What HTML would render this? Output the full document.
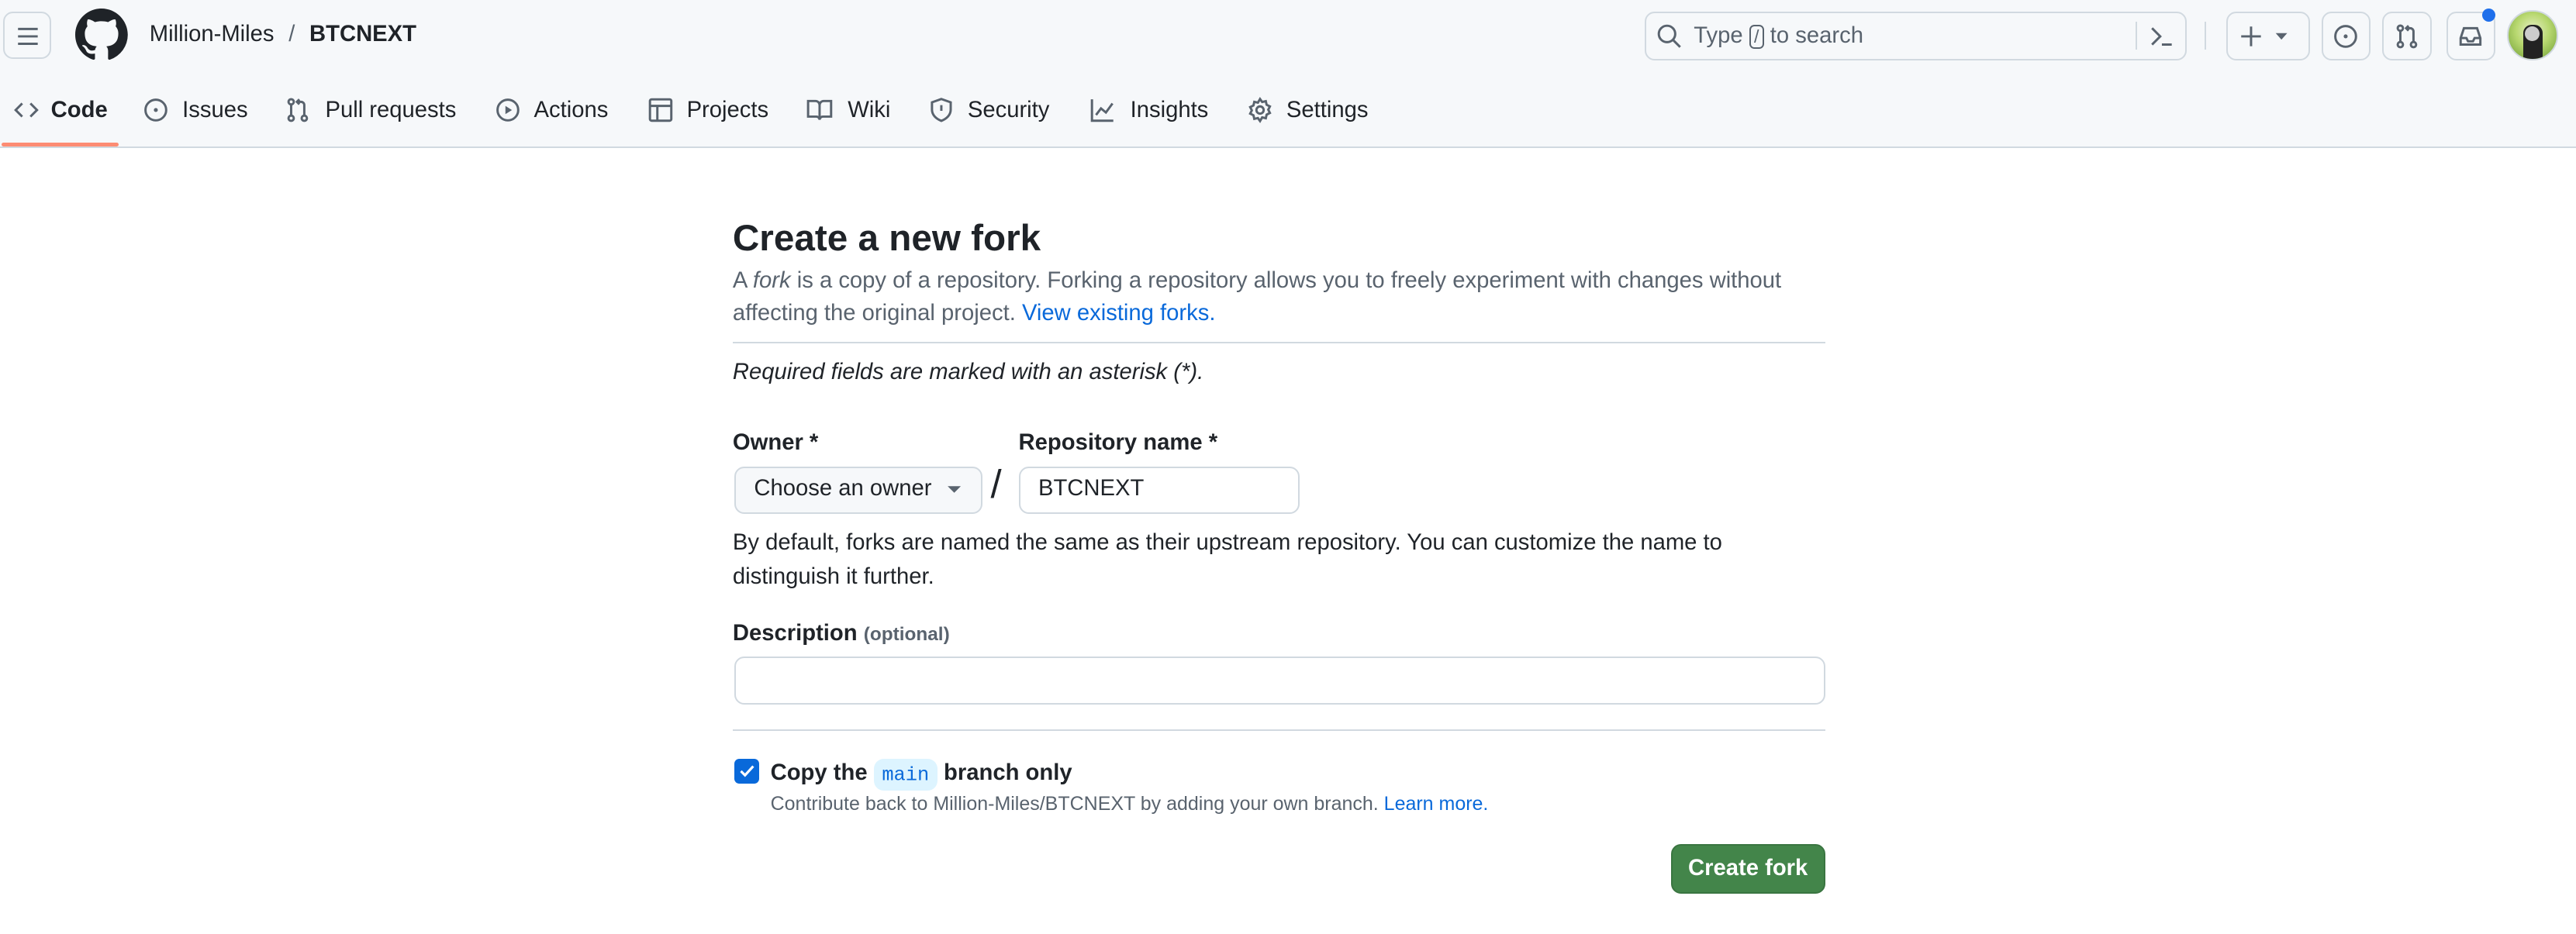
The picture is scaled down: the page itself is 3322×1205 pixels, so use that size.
<!DOCTYPE html>
<html><head><meta charset="utf-8"><style>
html,body{margin:0;padding:0;background:#fff;overflow:hidden}
#r{zoom:2.1186;width:1568px;height:569px;position:relative;font-family:"Liberation Sans",sans-serif;color:#1f2328;font-size:13.8px}
.a{position:absolute;white-space:nowrap}
.hdr{position:absolute;left:0;top:0;width:1568px;height:89px;background:#f6f8fa;border-bottom:1px solid #d1d9e0}
.btn{position:absolute;border:1px solid #d1d9e0;border-radius:6px;box-sizing:border-box;background:#f6f8fa}
svg{position:absolute}
.tab{position:absolute;top:58px;font-size:13.8px;line-height:18px}
.ic{stroke:#59636e;fill:none;stroke-width:1.4}
.m{color:#59636e}
a{color:#0969da;text-decoration:none}
.inp{position:absolute;border:1px solid #d1d9e0;border-radius:6px;box-sizing:border-box;background:#fff}
</style></head><body><div id="r">
<div class="hdr"></div>
<div class="btn" style="left:2px;top:7px;width:29px;height:29px"></div>
<svg style="left:9px;top:14px" width="16" height="16"><path d="M2 3.5h12M2 8h12M2 12.5h12" class="ic" stroke-width="1.5"/></svg>
<svg style="left:46px;top:5px" width="32" height="32" viewBox="0 0 16 16"><path fill="#1f2328" d="M8 0C3.58 0 0 3.580 0 8c0 3.54 2.29 6.53 5.47 7.59.4.07.55-.17.55-.38 0-.19-.01-.82-.01-1.490-2.010.37-2.530-.49-2.690-.94-.09-.23-.48-.94-.82-1.130-.28-.15-.68-.52-.01-.53.63-.01 1.080.58 1.230.82.72 1.210 1.870.87 2.330.66.07-.52.28-.87.51-1.070-1.780-.2-3.640-.89-3.640-3.950 0-.87.31-1.590.82-2.150-.08-.2-.36-1.020.08-2.120 0 0 .67-.21 2.200.82.64-.18 1.320-.27 2-.27.68 0 1.360.09 2 .27 1.530-1.040 2.200-.82 2.200-.82.44 1.100.16 1.920.08 2.120.51.56.82 1.270.82 2.150 0 3.070-1.870 3.750-3.650 3.950.29.25.54.73.54 1.480 0 1.070-.01 1.930-.01 2.200 0 .21.15.46.55.38A8.013 8.013 0 0016 8c0-4.420-3.580-8-8-8z"/></svg>
<div class="a" style="left:91px;top:13px;font-size:13.8px">Million-Miles <span style="color:#59636e;margin:0 5px">/</span> <b>BTCNEXT</b></div>
<div class="btn" style="left:1001px;top:7px;width:330px;height:30px"></div>
<svg style="left:1008px;top:14px" width="16" height="16"><circle cx="6.5" cy="6.5" r="5" class="ic" stroke-width="1.5"/><path d="M10 10l4.5 4.5" class="ic" stroke-width="1.5"/></svg>
<div class="a m" style="left:1031px;top:14px">Type <span style="display:inline-block;border:1px solid #59636e;border-radius:3px;font-size:11px;line-height:13px;padding:0 2px">/</span> to search</div>
<div class="a" style="left:1300px;top:13px;width:1px;height:17px;background:#d1d9e0"></div>
<svg style="left:1308px;top:14px" width="16" height="16"><path d="M2 3l5 5-5 5M8 13h6" class="ic" stroke-width="1.4"/></svg>
<div class="a" style="left:1342px;top:13px;width:1px;height:17px;background:#d1d9e0"></div>
<div class="btn" style="left:1355px;top:7px;width:51px;height:30px"></div>
<svg style="left:1362px;top:14px" width="36" height="16"><path d="M8 2v12M2 8h12" class="ic" stroke-width="1.5"/><path d="M23 6h7l-3.5 4z" fill="#59636e"/></svg>
<div class="btn" style="left:1413px;top:7px;width:30px;height:30px"></div>
<svg style="left:1420px;top:14px" width="16" height="16"><circle cx="8" cy="8" r="6.3" class="ic"/><circle cx="8" cy="8" r="1.2" fill="#59636e"/></svg>
<div class="btn" style="left:1450px;top:7px;width:30px;height:30px"></div>
<svg style="left:1457px;top:14px" width="16" height="16"><circle cx="4" cy="3" r="1.6" class="ic"/><circle cx="4" cy="13" r="1.6" class="ic"/><circle cx="12" cy="13" r="1.6" class="ic"/><path d="M4 4.6v6.8M12 11.4V5a2 2 0 00-2-2H7.5M9 1.5L7.5 3 9 4.5" class="ic"/></svg>
<div class="btn" style="left:1489px;top:7px;width:30px;height:30px"></div>
<svg style="left:1496px;top:14px" width="16" height="16"><path d="M2 9l2-6h8l2 6v4H2zM2 9h3.5l1 2h3l1-2H14" class="ic"/></svg>
<div class="a" style="left:1511px;top:5px;width:8px;height:8px;border-radius:50%;background:#1f6feb"></div>
<div class="a" style="left:1526px;top:6px;width:31px;height:31px;border-radius:50%;background:radial-gradient(circle at 50% 40%,#e8f0c8 0,#b8d870 45%,#6a9a30 100%);border:1px solid #d1d9e0;box-sizing:border-box;overflow:hidden"><div style="position:absolute;left:9px;top:8px;width:12px;height:24px;background:#222;border-radius:5px 5px 0 0"></div><div style="position:absolute;left:10px;top:9px;width:9px;height:9px;background:#ccc;border-radius:50%"></div></div>

<svg style="left:8px;top:59px" width="16" height="16"><path d="M5.5 4L1.5 8l4 4M10.5 4l4 4-4 4" class="ic"/></svg>
<div class="tab" style="left:31px;font-weight:bold">Code</div>
<div class="a" style="left:1px;top:87px;width:71px;height:2px;background:#fd8c73;border-radius:2px"></div>
<svg style="left:87px;top:59px" width="16" height="16"><circle cx="8" cy="8" r="6.3" class="ic"/><circle cx="8" cy="8" r="1.2" fill="#59636e"/></svg>
<div class="tab" style="left:111px">Issues</div>
<svg style="left:173px;top:59px" width="16" height="16"><circle cx="4" cy="3" r="1.6" class="ic"/><circle cx="4" cy="13" r="1.6" class="ic"/><circle cx="12" cy="13" r="1.6" class="ic"/><path d="M4 4.6v6.8M12 11.4V5a2 2 0 00-2-2H7.5M9 1.5L7.5 3 9 4.5" class="ic"/></svg>
<div class="tab" style="left:198px">Pull requests</div>
<svg style="left:301px;top:59px" width="16" height="16"><circle cx="8" cy="8" r="6.3" class="ic"/><path d="M6.5 5.5v5l4-2.5z" fill="#59636e"/></svg>
<div class="tab" style="left:325px">Actions</div>
<svg style="left:394px;top:59px" width="16" height="16"><rect x="1.5" y="1.5" width="13" height="13" rx="1" class="ic"/><path d="M1.5 5.5h13M6 5.5v9" class="ic"/></svg>
<div class="tab" style="left:418px">Projects</div>
<svg style="left:491px;top:59px" width="16" height="16"><path d="M1 2.5h4.5A2.5 2.5 0 018 5v9a2 2 0 00-2-2H1zM15 2.5h-4.5A2.5 2.5 0 008 5v9a2 2 0 012-2h5z" class="ic"/></svg>
<div class="tab" style="left:516px">Wiki</div>
<svg style="left:565px;top:59px" width="16" height="16"><path d="M8 1.3l5.7 2v4.5c0 3.3-2.6 5.6-5.7 6.8C4.9 13.4 2.3 11.1 2.3 7.8V3.3z M8 5v3.5" class="ic"/></svg>
<div class="tab" style="left:589px">Security</div>
<svg style="left:663px;top:59px" width="16" height="16"><path d="M1.5 1.5v13h13M4 11l3-4 3 2.5 4-5.5" class="ic"/></svg>
<div class="tab" style="left:688px">Insights</div>
<svg style="left:759px;top:59px" width="16" height="16"><circle cx="8" cy="8" r="2.2" class="ic"/><path d="M8 1.3l1.3 1.8 2.2-.5.5 2.2 2 1-1 2 1 2-2 1-.5 2.2-2.2-.5L8 14.7l-1.3-1.8-2.2.5-.5-2.2-2-1 1-2-1-2 2-1 .5-2.2 2.2.5z" class="ic"/></svg>
<div class="tab" style="left:783px">Settings</div>

<div class="a" style="left:446px;top:132px;font-size:22.5px;font-weight:bold">Create a new fork</div>
<div class="a m" style="left:446px;top:161px;line-height:20px;white-space:normal;width:665px">A <i>fork</i> is a copy of a repository. Forking a repository allows you to freely experiment with changes without affecting the original project. <a>View existing forks.</a></div>
<div class="a" style="left:446px;top:208px;width:665px;height:1px;background:#d1d9e0"></div>
<div class="a" style="left:446px;top:219px;font-style:italic">Required fields are marked with an asterisk (*).</div>
<div class="a" style="left:446px;top:262px;font-weight:bold">Owner *</div>
<div class="a" style="left:620px;top:262px;font-weight:bold">Repository name *</div>
<div class="btn" style="left:447px;top:284px;width:151px;height:29px"></div>
<div class="a" style="left:459px;top:290px">Choose an owner</div>
<svg style="left:576px;top:294px" width="10" height="8"><path d="M1 2h8l-4 4z" fill="#59636e"/></svg>
<div class="a" style="left:603px;top:281px;font-size:24px">/</div>
<div class="inp" style="left:620px;top:284px;width:171px;height:29px"></div>
<div class="a" style="left:632px;top:290px">BTCNEXT</div>
<div class="a" style="left:446px;top:320px;line-height:21px;white-space:normal;width:640px">By default, forks are named the same as their upstream repository. You can customize the name to distinguish it further.</div>
<div class="a" style="left:446px;top:378px"><b>Description</b> <span class="m" style="font-size:11.5px;font-weight:bold">(optional)</span></div>
<div class="inp" style="left:447px;top:400px;width:664px;height:29px"></div>
<div class="a" style="left:446px;top:444px;width:665px;height:1px;background:#d1d9e0"></div>
<div class="a" style="left:447px;top:462px;width:15px;height:15px;border-radius:3px;background:#0969da"></div>
<svg style="left:447px;top:462px" width="15" height="15"><path d="M4 7.5l2.5 2.5 5-5.5" stroke="#fff" stroke-width="1.5" fill="none"/></svg>
<div class="a" style="left:469px;top:463px;font-weight:bold">Copy the <span style="font-family:'Liberation Mono',monospace;font-weight:normal;font-size:12px;color:#0969da;background:#ddf4ff;border-radius:6px;padding:3px 5px">main</span> branch only</div>
<div class="a m" style="left:469px;top:483px;font-size:11.8px">Contribute back to Million-Miles/BTCNEXT by adding your own branch. <a>Learn more.</a></div>
<div class="a" style="left:1017px;top:514px;width:94px;height:30px;border-radius:6px;background:#43854a;color:#fff;font-weight:bold;text-align:center;line-height:28px;box-sizing:border-box;border:1px solid #3a7541">Create fork</div>
</div></body></html>
